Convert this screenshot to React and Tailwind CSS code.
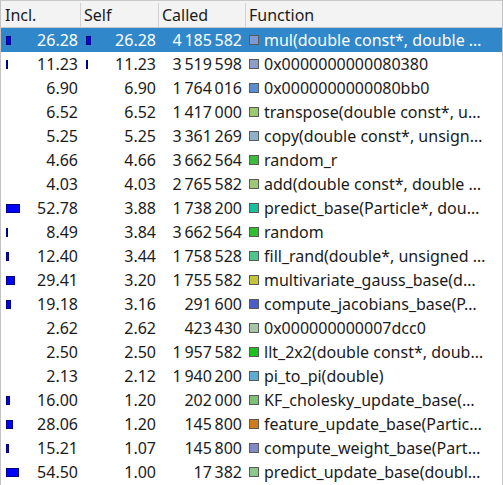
const rows = [
    { incl: '26.28', self: '26.28', called: '4 185 582', fn: 'mul(double const*, double …', color: '#7d9bd0', ib: 5, sb: 5 },
    { incl: '11.23', self: '11.23', called: '3 519 598', fn: '0x0000000000080380', color: '#8c9ec8', ib: 2, sb: 2 },
    { incl: '6.90', self: '6.90', called: '1 764 016', fn: '0x0000000000080bb0', color: '#5a8ed4' },
    { incl: '6.52', self: '6.52', called: '1 417 000', fn: 'transpose(double const*, u…', color: '#9cc86e' },
    { incl: '5.25', self: '5.25', called: '3 361 269', fn: 'copy(double const*, unsign…', color: '#8eb0c8' },
    { incl: '4.66', self: '4.66', called: '3 662 564', fn: 'random_r', color: '#3cbc3c' },
    { incl: '4.03', self: '4.03', called: '2 765 582', fn: 'add(double const*, double …', color: '#9cc878' },
    { incl: '52.78', self: '3.88', called: '1 738 200', fn: 'predict_base(Particle*, dou…', color: '#1cbf9c', ib: 14 },
    { incl: '8.49', self: '3.84', called: '3 662 564', fn: 'random', color: '#2fbf2f', ib: 2 },
    { incl: '12.40', self: '3.44', called: '1 758 528', fn: 'fill_rand(double*, unsigned …', color: '#4cc48c', ib: 3 },
    { incl: '29.41', self: '3.20', called: '1 755 582', fn: 'multivariate_gauss_base(d…', color: '#c4c43c', ib: 9 },
    { incl: '19.18', self: '3.16', called: '291 600', fn: 'compute_jacobians_base(P…', color: '#4c5cc8', ib: 5 },
    { incl: '2.62', self: '2.62', called: '423 430', fn: '0x000000000007dcc0', color: '#a8c4a8' },
    { incl: '2.50', self: '2.50', called: '1 957 582', fn: 'llt_2x2(double const*, doub…', color: '#1fbf1f' },
    { incl: '2.13', self: '2.12', called: '1 940 200', fn: 'pi_to_pi(double)', color: '#5cacd4' },
    { incl: '16.00', self: '1.20', called: '202 000', fn: 'KF_cholesky_update_base(…', color: '#7cc07c', ib: 4 },
    { incl: '28.06', self: '1.20', called: '145 800', fn: 'feature_update_base(Partic…', color: '#d07a1c', ib: 7 },
    { incl: '15.21', self: '1.07', called: '145 800', fn: 'compute_weight_base(Part…', color: '#8088c8', ib: 3 },
    { incl: '54.50', self: '1.00', called: '17 382', fn: 'predict_update_base(doubl…', color: '#8cc88c', ib: 13 },
];

// thin spaces between digit groups, like the original view
const fmt = (s) => s.replace(/ /g, '\u2009');

function Bar({ w }) {
    if (!w) return null;
    return (
        <span
            className="absolute left-[5px] top-[8px] h-[9px] border border-[#00007a] bg-[#0000ff]"
            style={{ width: w }}
        />
    );
}

export default function App() {
    return (
        <div
            className="h-[485px] w-[503px] overflow-hidden border-l border-r border-[#c4c4c4] bg-white text-[16px] text-[#1b1b1b]"
            style={{ fontFamily: '"Noto Sans", "DejaVu Sans", sans-serif' }}
        >
            <div className="grid h-[28px] grid-cols-[80px_78px_87px_1fr] border-t border-b border-[#c8c8c8] bg-[#f3f3f3] pt-[2px] leading-[24px]">
                <div className="border-r border-[#d2d2d2] pl-[4px]">Incl.</div>
                <div className="border-r border-[#d2d2d2] pl-[3px]">Self</div>
                <div className="border-r border-[#d2d2d2] pl-[3px]">Called</div>
                <div className="pl-[3px]">Function</div>
            </div>

            {rows.map((r, i) => {
                const sel = i === 0;
                return (
                    <div
                        key={i}
                        className={
                            sel
                                ? 'grid h-[24px] grid-cols-[80px_78px_87px_1fr] bg-[#3088cb] leading-[24px] text-white'
                                : 'grid h-[24px] grid-cols-[80px_78px_87px_1fr] leading-[24px]'
                        }
                    >
                        <div className="relative pr-[3px] text-right">
                            <Bar w={r.ib} />
                            {r.incl}
                        </div>
                        <div className="relative pr-[3px] text-right">
                            <Bar w={r.sb} />
                            {r.self}
                        </div>
                        <div className="whitespace-nowrap pr-[4px] text-right">
                            {fmt(r.called)}
                        </div>
                        <div className="flex items-center gap-[5px] overflow-hidden whitespace-nowrap pl-[3px]">
                            <span
                                className="h-[10px] w-[10px] shrink-0 border border-[#5a5a5a]"
                                style={{ backgroundColor: r.color }}
                            />
                            <span>{r.fn}</span>
                        </div>
                    </div>
                );
            })}
        </div>
    );
}
